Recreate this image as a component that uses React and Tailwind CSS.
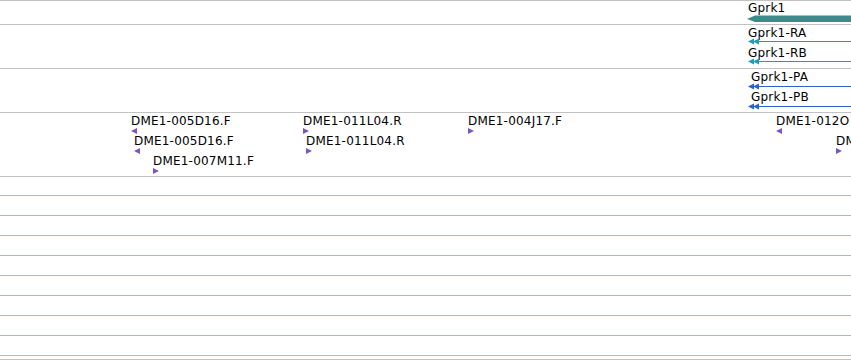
import React from 'react';

const font = { fontFamily: '"DejaVu Sans", Verdana, sans-serif' };

function Label({ x, y, children }) {
  return (
    <span className="absolute whitespace-nowrap text-[12px] leading-[14px] tracking-[0.2px] text-black" style={{ left: x, top: y }}>
      {children}
    </span>
  );
}

function Tri({ x, y, dir }) {
  return (
    <svg className="absolute" style={{ left: x, top: y }} width="6" height="6" viewBox="0 0 6 6">
      {dir === 'left' ? <polygon points="0,3 6,0 6,6" fill="#7b55c4" /> : <polygon points="0,0 6,3 0,6" fill="#7b55c4" />}
    </svg>
  );
}

function Transcript({ y, color }) {
  return (
    <svg className="absolute left-[747px]" style={{ top: y }} width="104" height="7" viewBox="0 0 104 7">
      <line x1="2" y1="3.5" x2="104" y2="3.5" stroke={color} strokeWidth="1" />
      <polygon points="1,3.5 7,0.5 7,6.5" fill={color} />
      <polygon points="6,3.5 12,0.5 12,6.5" fill={color} />
    </svg>
  );
}

const features = [
  { x: 131, y: 114, t: 'DME1-005D16.F', dir: 'left' },
  { x: 134, y: 134, t: 'DME1-005D16.F', dir: 'left' },
  { x: 153, y: 154, t: 'DME1-007M11.F', dir: 'right' },
  { x: 303, y: 114, t: 'DME1-011L04.R', dir: 'right' },
  { x: 306, y: 134, t: 'DME1-011L04.R', dir: 'right' },
  { x: 468, y: 114, t: 'DME1-004J17.F', dir: 'right' },
  { x: 776, y: 114, t: 'DME1-012O', dir: 'left' },
  { x: 836, y: 134, t: 'DME1-012P', dir: 'right' },
];

export default function App() {
  return (
    <div className="w-[851px] h-[360px] overflow-hidden bg-white relative" style={font}>
      <div className="border-t border-[#c2c2c2]">
        <div className="relative h-[24px] border-b border-[#c2c2c2]">
          <Label x={748} y={0}>Gprk1</Label>
          <svg className="absolute left-[747px] top-[14px]" width="104" height="8" viewBox="0 0 104 8">
            <polygon points="0,4 8,0.5 104,0.5 104,7 8,7" fill="#3d8c8c" />
          </svg>
        </div>
        <div className="relative h-[44px] border-b border-[#c2c2c2]">
          <Label x={748} y={1}>Gprk1-RA</Label>
          <Transcript y={13} color="#1d9bc4" />
          <Label x={748} y={21}>Gprk1-RB</Label>
          <Transcript y={33} color="#1d9bc4" />
        </div>
        <div className="relative h-[44px] border-b border-[#c2c2c2]">
          <Label x={751} y={1}>Gprk1-PA</Label>
          <Transcript y={14} color="#2f5fd0" />
          <Label x={751} y={21}>Gprk1-PB</Label>
          <Transcript y={34} color="#2f5fd0" />
        </div>
        <div className="relative h-[64px] border-b border-[#c2c2c2]">
          {features.map((f, i) => (
            <React.Fragment key={i}>
              <Label x={f.x} y={f.y - 113}>{f.t}</Label>
              <Tri x={f.x} y={f.y - 113 + 14} dir={f.dir} />
            </React.Fragment>
          ))}
        </div>
        <div className="h-[19px] border-b border-[#97c0de]" />
        {[0, 1, 2, 3, 4, 5, 6, 7].map((i) => (
          <div key={i} className="h-[20px] border-b border-[#97c0de]" />
        ))}
        <div className="h-[4px] border-b border-[#c2c2c2]" />
      </div>
    </div>
  );
}
